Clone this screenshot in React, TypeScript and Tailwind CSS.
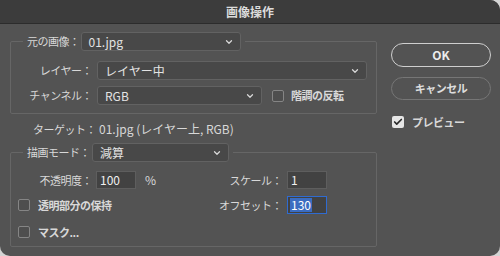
import { ChevronDown, Check } from 'lucide-react'

const font = { fontFamily: '"Noto Sans CJK JP", "Noto Sans", sans-serif' }

function Select({ value, className }: { value: string; className: string }) {
    return (
        <div className={`flex h-[19px] shrink-0 items-center justify-between rounded-[3px] border border-[#626262] bg-[#484848] pl-[7px] pr-[6px] text-[12px] tracking-normal text-[#e4e4e4] ${className}`}>
            <span className="whitespace-nowrap">{value}</span>
            <ChevronDown className="h-[10px] w-[10px] text-[#d8d8d8]" strokeWidth={3} />
        </div>
    )
}

function Box({ checked }: { checked?: boolean }) {
    if (checked) {
        return (
            <span className="flex h-[12px] w-[12px] shrink-0 items-center justify-center rounded-[2px] bg-[#e6e6e6]">
                <Check className="h-[10px] w-[10px] text-[#2a2a2a]" strokeWidth={4} />
            </span>
        )
    }
    return <span className="h-[12px] w-[12px] shrink-0 rounded-[2px] border border-[#858585] bg-[#4e4e4e]" />
}

function Input({ value, focused }: { value: string; focused?: boolean }) {
    return (
        <div
            className={
                focused
                    ? 'flex h-[18px] w-[40px] shrink-0 items-center border-[1.5px] border-[#2f6bd1] bg-[#424242] pl-[2px] text-[12px] tracking-normal text-white'
                    : 'flex h-[18px] w-[40px] shrink-0 items-center border border-[#5e5e5e] bg-[#424242] pl-[3px] text-[12px] tracking-normal text-[#f0f0f0]'
            }
        >
            {focused ? <span className="bg-[#3b6cc0] px-[1px] leading-[14px]">{value}</span> : value}
        </div>
    )
}

export default function App() {
    return (
        <div className="h-[256px] w-[500px] bg-[#d4d4d4] whitespace-nowrap" style={font}>
            <div className="flex h-[256px] w-[500px] flex-col overflow-hidden rounded-tr-[10px] rounded-bl-[10px] rounded-br-[10px] bg-[#535353] text-[11px] tracking-[-0.5px] text-[#d8d8d8]">
                <div className="flex h-[24px] shrink-0 items-center justify-center border-b border-[#2c2c2c] bg-[#3c3c3c] text-[12px] font-bold tracking-normal text-[#dcdcdc]">
                    画像操作
                </div>

                <div className="flex pt-[8px]">
                    <div className="ml-[10px] w-[367px] shrink-0">
                        <fieldset className="h-[82px] rounded-[2px] border border-[#666666]">
                            <legend className="ml-[12px] flex items-center px-[4px]">
                                <span className="mr-[1px]">元の画像：</span>
                                <Select value="01.jpg" className="w-[160px]" />
                            </legend>
                            <div className="mt-[10px] flex h-[19px] items-center">
                                <span className="w-[81px] shrink-0 text-right">レイヤー：</span>
                                <Select value="レイヤー中" className="ml-[5px] w-[270px]" />
                            </div>
                            <div className="mt-[6px] flex h-[19px] items-center">
                                <span className="w-[81px] shrink-0 text-right">チャンネル：</span>
                                <Select value="RGB" className="ml-[5px] w-[165px]" />
                                <span className="ml-[10px] flex"><Box /></span>
                                <span className="ml-[7px] font-bold">階調の反転</span>
                            </div>
                        </fieldset>

                        <div className="ml-[23px] mt-[6px] flex h-[18px] items-center">
                            <span>ターゲット：</span>
                            <span className="ml-[3px] text-[12px] tracking-normal">01.jpg (レイヤー上, RGB)</span>
                        </div>

                        <fieldset className="mt-[5px] h-[104px] rounded-[2px] border border-[#666666]">
                            <legend className="ml-[12px] flex items-center px-[4px]">
                                <span className="mr-[2px]">描画モード：</span>
                                <Select value="減算" className="w-[137px]" />
                            </legend>
                            <div className="mt-[9px] flex h-[18px] items-center">
                                <div className="flex w-[201px] shrink-0 items-center">
                                    <span className="w-[81px] shrink-0 text-right">不透明度：</span>
                                    <span className="ml-[4px] flex"><Input value="100" /></span>
                                    <span className="ml-[9px] text-[12px]">%</span>
                                </div>
                                <span className="w-[70px] shrink-0 text-right">スケール：</span>
                                <span className="ml-[5px] flex"><Input value="1" /></span>
                            </div>
                            <div className="mt-[7px] flex h-[18px] items-center">
                                <div className="flex w-[201px] shrink-0 items-center pl-[7px]">
                                    <Box />
                                    <span className="ml-[8px] font-bold">透明部分の保持</span>
                                </div>
                                <span className="w-[70px] shrink-0 text-right">オフセット：</span>
                                <span className="ml-[5px] flex"><Input value="130" focused /></span>
                            </div>
                            <div className="mt-[9px] flex h-[18px] items-center pl-[7px]">
                                <Box />
                                <span className="ml-[8px] font-bold">マスク...</span>
                            </div>
                        </fieldset>
                    </div>

                    <div className="ml-[14px] flex w-[100px] shrink-0 flex-col pt-[11px]">
                        <button className="flex h-[24px] items-center justify-center rounded-full border-[1.5px] border-[#cfcfcf] text-[12px] font-bold tracking-normal text-[#ececec]">
                            OK
                        </button>
                        <button className="mt-[10px] flex h-[23px] items-center justify-center rounded-full border border-[#767676] font-bold text-[#dedede]">
                            キャンセル
                        </button>
                        <div className="ml-[1px] mt-[14px] flex items-center">
                            <Box checked />
                            <span className="ml-[8px] font-bold">プレビュー</span>
                        </div>
                    </div>
                </div>
            </div>
        </div>
    )
}
